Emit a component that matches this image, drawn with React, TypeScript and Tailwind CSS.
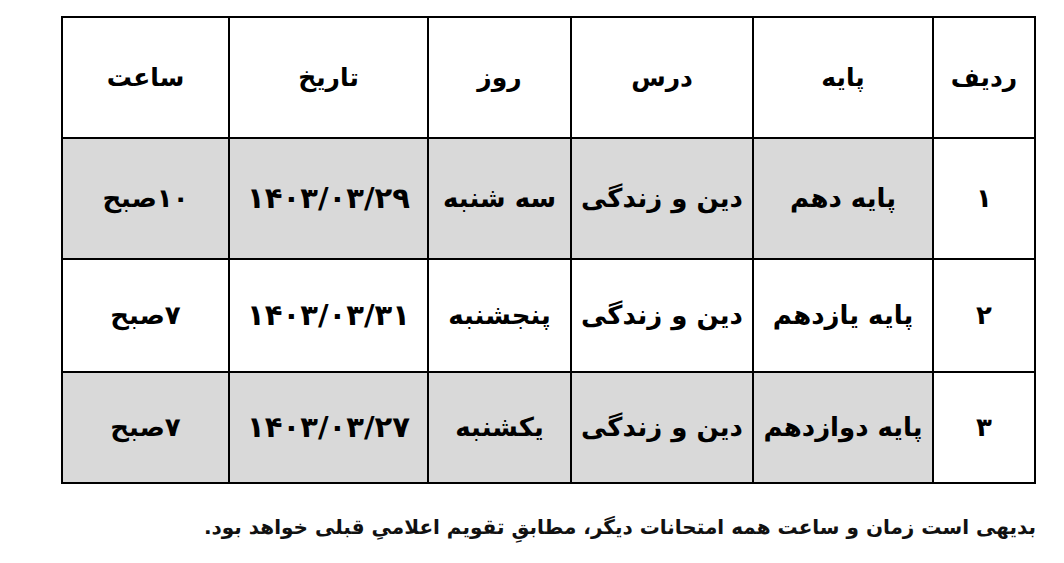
const headers = ['ردیف', 'پایه', 'درس', 'روز', 'تاریخ', 'ساعت']

const widths = ['w-[102px]', 'w-[180px]', 'w-[182px]', 'w-[143px]', 'w-[199px]', 'w-[167px]']

const rows = [
    { no: '۱', grade: 'پایه دهم', lesson: 'دین و زندگی', day: 'سه شنبه', date: '۱۴۰۳/۰۳/۲۹', time: '۱۰صبح', shaded: true, h: 'h-[121px]' },
    { no: '۲', grade: 'پایه یازدهم', lesson: 'دین و زندگی', day: 'پنجشنبه', date: '۱۴۰۳/۰۳/۳۱', time: '۷صبح', shaded: false, h: 'h-[113px]' },
    { no: '۳', grade: 'پایه دوازدهم', lesson: 'دین و زندگی', day: 'یکشنبه', date: '۱۴۰۳/۰۳/۲۷', time: '۷صبح', shaded: true, h: 'h-[111px]' },
]

export default function App() {
    return (
        <div
            dir="rtl"
            className="w-[1064px] h-[563px] bg-white overflow-hidden"
            style={{ fontFamily: '"DejaVu Sans", "Noto Sans", sans-serif' }}
        >
            <div className="pt-[16px] pr-[28px]">
                <table className="border-collapse border-2 border-black text-black">
                    <thead>
                        <tr className="h-[121px]">
                            {headers.map((h, i) => (
                                <th key={h} className={`${widths[i]} border-2 border-black text-[25px] font-bold text-center align-middle`}>
                                    {h}
                                </th>
                            ))}
                        </tr>
                    </thead>
                    <tbody>
                        {rows.map((r) => {
                            const bg = r.shaded ? 'bg-[#d9d9d9]' : 'bg-white'
                            return (
                                <tr key={r.no} className={r.h}>
                                    <td className="border-2 border-black bg-white text-center text-[26px] font-bold">{r.no}</td>
                                    <td className={`${bg} border-2 border-black text-center text-[26px] font-bold whitespace-nowrap`}>{r.grade}</td>
                                    <td className={`${bg} border-2 border-black text-center text-[26px] font-bold whitespace-nowrap`}>{r.lesson}</td>
                                    <td className={`${bg} border-2 border-black text-center text-[26px] font-bold whitespace-nowrap`}>{r.day}</td>
                                    <td className={`${bg} border-2 border-black text-center text-[29px] font-bold whitespace-nowrap tracking-[1px]`}>{r.date}</td>
                                    <td className={`${bg} border-2 border-black text-center text-[26px] font-bold whitespace-nowrap`}>{r.time}</td>
                                </tr>
                            )
                        })}
                    </tbody>
                </table>
                <p className="mt-[28px] text-[20px] font-semibold text-[#111]">
                    بدیهی است زمان و ساعت همه امتحانات دیگر، مطابقِ تقویم اعلامیِ قبلی خواهد بود.
                </p>
            </div>
        </div>
    )
}
